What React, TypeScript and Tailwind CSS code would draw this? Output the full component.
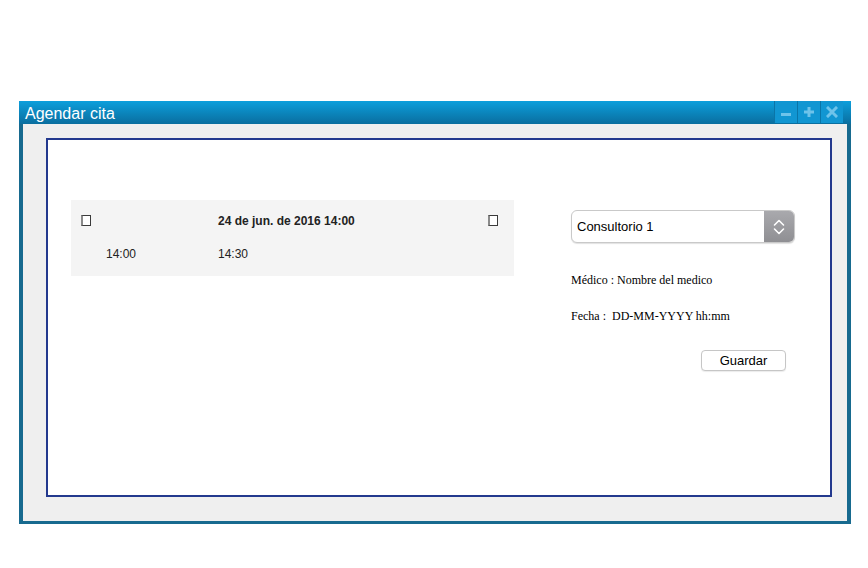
import React from "react";

const Checkbox = () => (
  <span className="block w-[10px] h-[11px] border border-[#3a3a3a] border-l-2 border-l-[#8a8a8a] bg-white" />
);

const TitleButton = ({ kind }: { kind: "min" | "max" | "close" }) => (
  <div className="w-[23px] h-[22px] flex items-center justify-center bg-[#1196d2] border-l border-[#0a75a8]">
    <svg width="12" height="12" viewBox="0 0 12 12">
      {kind === "min" && <rect x="1" y="7" width="10" height="3" fill="#6ec3ea" />}
      {kind === "max" && (
        <path d="M4.5 1h3v3.5H11v3H7.5V11h-3V7.5H1v-3h3.5z" fill="#6ec3ea" />
      )}
      {kind === "close" && (
        <path
          d="M2 2l8 8M10 2l-8 8"
          stroke="#6ec3ea"
          strokeWidth="3"
          strokeLinecap="square"
        />
      )}
    </svg>
  </div>
);

export default function App() {
  return (
    <div className="w-[868px] h-[568px] bg-white pt-[101px] pl-[19px] font-['Liberation_Sans',Arial,sans-serif]">
      <div className="w-[832px] h-[423px] flex flex-col bg-[#176a8f]">
        {/* title bar */}
        <div className="h-[23px] flex items-start bg-gradient-to-b from-[#0c9fdc] to-[#0a6e9f]">
          <span className="pl-[6px] pt-[3px] text-[16px] leading-[20px] text-white">
            Agendar cita
          </span>
          <div className="ml-auto mr-[8px] flex">
            <TitleButton kind="min" />
            <TitleButton kind="max" />
            <TitleButton kind="close" />
          </div>
        </div>

        {/* body */}
        <div className="flex-1 mx-[4px] mb-[3px] bg-[#efefef] pl-[23px] pr-[15px] pt-[14px] pb-[24px]">
          <div className="h-full border-2 border-[#23398e] bg-white flex items-start">
            {/* schedule table */}
            <div className="ml-[23px] mt-[60px] w-[443px] h-[76px] bg-[#f4f4f4] text-[12px] text-[#222]">
              <div className="h-[41px] flex items-center">
                <div className="w-[147px] pl-[10px]">
                  <Checkbox />
                </div>
                <span className="font-bold flex-1">24 de jun. de 2016 14:00</span>
                <div className="pr-[16px]">
                  <Checkbox />
                </div>
              </div>
              <div className="h-[26px] flex items-center">
                <span className="w-[147px] pl-[35px]">14:00</span>
                <span>14:30</span>
              </div>
            </div>

            {/* form */}
            <div className="ml-[57px] mt-[70px] w-[224px] flex flex-col">
              <div className="h-[33px] flex rounded-[6px] border border-[#c9c9c9] bg-white overflow-hidden shadow-[0_1px_1px_rgba(0,0,0,0.12)]">
                <span className="flex-1 pl-[5px] text-[13px] leading-[31px] text-black">
                  Consultorio 1
                </span>
                <div className="w-[30px] flex items-center justify-center bg-gradient-to-b from-[#a9a9ad] to-[#8f8f93]">
                  <svg width="12" height="20" viewBox="0 0 12 20">
                    <path
                      d="M1.5 8l4.5-4.5 4.5 4.5M1.5 12l4.5 4.5 4.5-4.5"
                      stroke="white"
                      strokeWidth="1.6"
                      fill="none"
                      strokeLinecap="round"
                      strokeLinejoin="round"
                    />
                  </svg>
                </div>
              </div>
              <p className="mt-[30px] text-[12px] leading-[14px] text-black font-['Liberation_Serif','Times_New_Roman',serif]">
                Médico : Nombre del medico
              </p>
              <p className="mt-[22px] text-[12px] leading-[14px] text-black font-['Liberation_Serif','Times_New_Roman',serif] whitespace-pre">
                Fecha :  DD-MM-YYYY hh:mm
              </p>
              <button className="mt-[27px] self-end mr-[9px] w-[85px] h-[21px] rounded-[4px] border border-[#c6c6c6] bg-white text-[13px] leading-[19px] text-black shadow-[0_1px_1px_rgba(0,0,0,0.08)]">
                Guardar
              </button>
            </div>
          </div>
        </div>
      </div>
    </div>
  );
}
